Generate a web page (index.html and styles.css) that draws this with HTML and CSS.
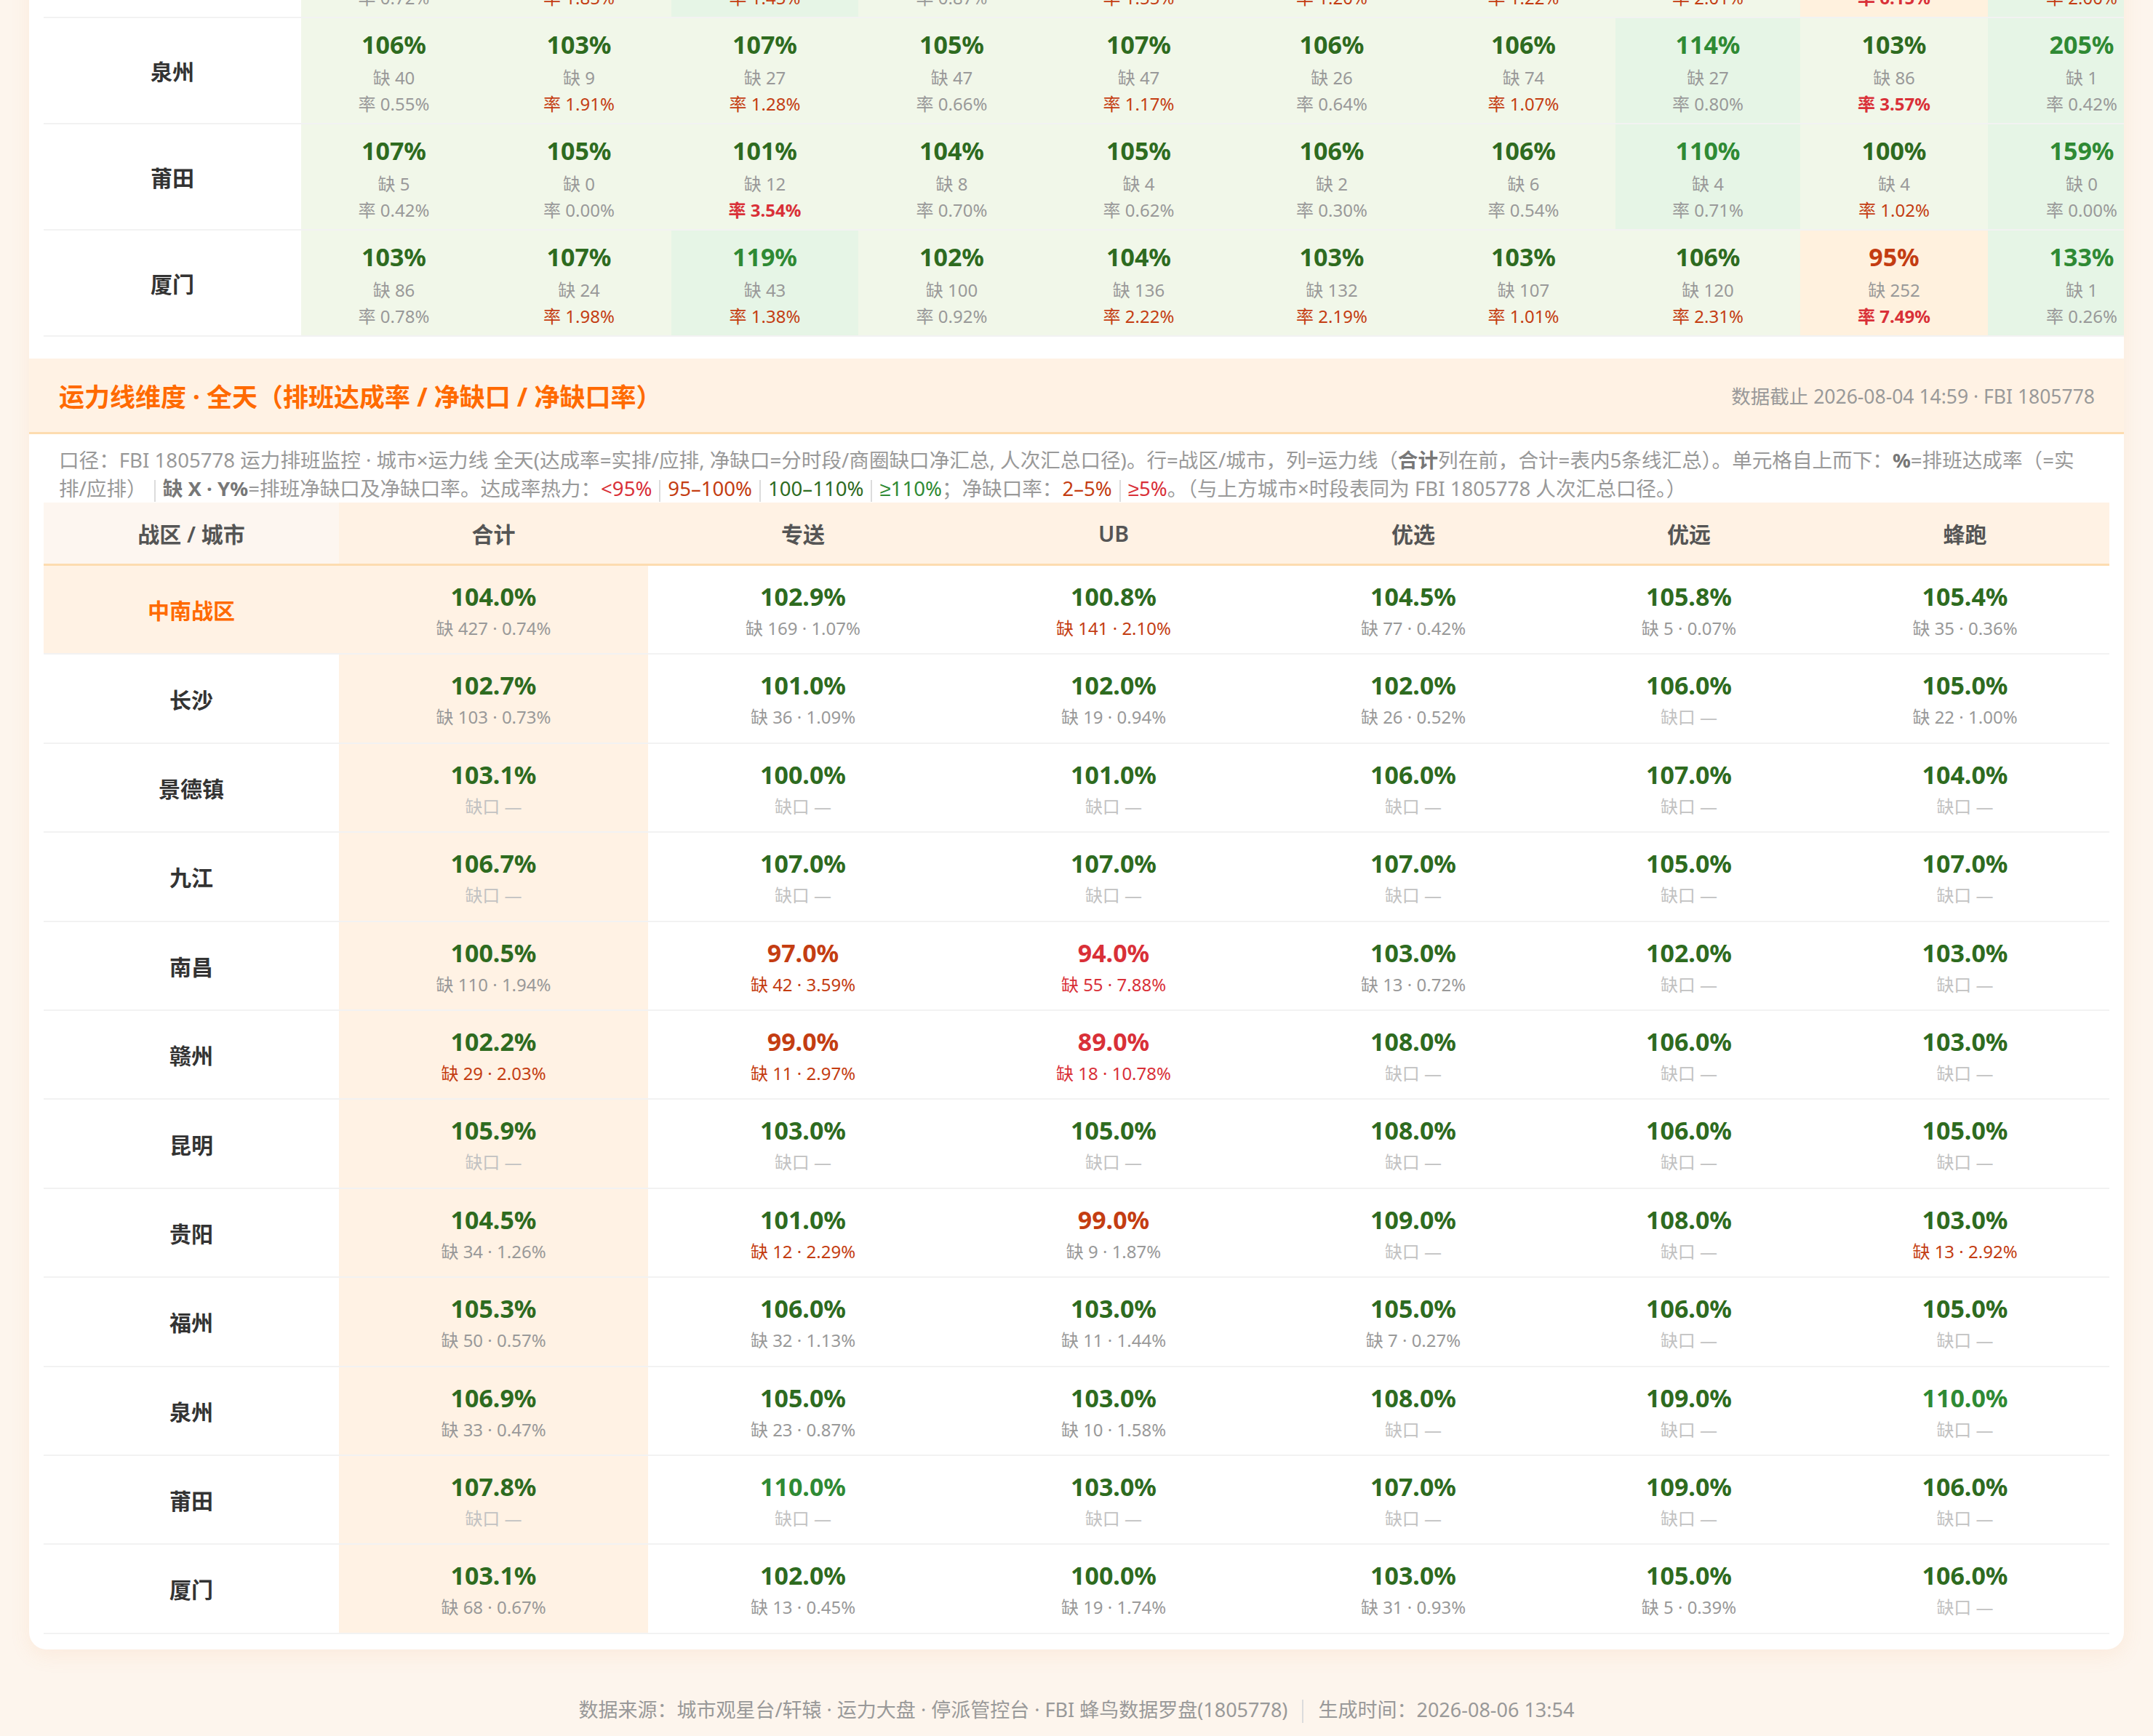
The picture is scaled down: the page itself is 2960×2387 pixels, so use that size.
FILE: index.html
```html
<!DOCTYPE html>
<html lang="zh-CN">
<head>
<meta charset="utf-8">
<title>运力排班监控</title>
<link rel="stylesheet" href="styles.css">
</head>
<body>
<div class="page">
  <div class="card">
    <div class="sec-top">
      <table class="tbl-top">
        <colgroup>
          <col class="w-lab"><col class="w255"><col class="w254"><col class="w257"><col class="w257"><col class="w257"><col class="w274"><col class="w253"><col class="w254"><col class="w258"><col class="w258">
        </colgroup>
        <tbody>
          <tr>
            <td class="lab">福州</td>
            <td class="g1"><div class="v">106%</div><div class="q">缺 63</div><div class="q">率 0.72%</div></td>
            <td class="g1"><div class="v">104%</div><div class="q">缺 30</div><div class="q ro">率 1.85%</div></td>
            <td class="g2"><div class="v">112%</div><div class="q">缺 35</div><div class="q ro">率 1.45%</div></td>
            <td class="g1"><div class="v">104%</div><div class="q">缺 58</div><div class="q">率 0.87%</div></td>
            <td class="g1"><div class="v">105%</div><div class="q">缺 80</div><div class="q ro">率 1.55%</div></td>
            <td class="g1"><div class="v">104%</div><div class="q">缺 40</div><div class="q ro">率 1.20%</div></td>
            <td class="g1"><div class="v">105%</div><div class="q">缺 95</div><div class="q ro">率 1.22%</div></td>
            <td class="g1"><div class="v">108%</div><div class="q">缺 60</div><div class="q ro">率 2.01%</div></td>
            <td class="o1"><div class="v">97%</div><div class="q">缺 170</div><div class="q rr">率 6.15%</div></td>
            <td class="g2"><div class="v">125%</div><div class="q">缺 2</div><div class="q ro">率 2.00%</div></td>
          </tr>
          <tr>
            <td class="lab">泉州</td>
            <td class="g1"><div class="v">106%</div><div class="q">缺 40</div><div class="q">率 0.55%</div></td>
            <td class="g1"><div class="v">103%</div><div class="q">缺 9</div><div class="q ro">率 1.91%</div></td>
            <td class="g1"><div class="v">107%</div><div class="q">缺 27</div><div class="q ro">率 1.28%</div></td>
            <td class="g1"><div class="v">105%</div><div class="q">缺 47</div><div class="q">率 0.66%</div></td>
            <td class="g1"><div class="v">107%</div><div class="q">缺 47</div><div class="q ro">率 1.17%</div></td>
            <td class="g1"><div class="v">106%</div><div class="q">缺 26</div><div class="q">率 0.64%</div></td>
            <td class="g1"><div class="v">106%</div><div class="q">缺 74</div><div class="q ro">率 1.07%</div></td>
            <td class="g2"><div class="v">114%</div><div class="q">缺 27</div><div class="q">率 0.80%</div></td>
            <td class="g1"><div class="v">103%</div><div class="q">缺 86</div><div class="q rr">率 3.57%</div></td>
            <td class="g2"><div class="v">205%</div><div class="q">缺 1</div><div class="q">率 0.42%</div></td>
          </tr>
          <tr>
            <td class="lab">莆田</td>
            <td class="g1"><div class="v">107%</div><div class="q">缺 5</div><div class="q">率 0.42%</div></td>
            <td class="g1"><div class="v">105%</div><div class="q">缺 0</div><div class="q">率 0.00%</div></td>
            <td class="g1"><div class="v">101%</div><div class="q">缺 12</div><div class="q rr">率 3.54%</div></td>
            <td class="g1"><div class="v">104%</div><div class="q">缺 8</div><div class="q">率 0.70%</div></td>
            <td class="g1"><div class="v">105%</div><div class="q">缺 4</div><div class="q">率 0.62%</div></td>
            <td class="g1"><div class="v">106%</div><div class="q">缺 2</div><div class="q">率 0.30%</div></td>
            <td class="g1"><div class="v">106%</div><div class="q">缺 6</div><div class="q">率 0.54%</div></td>
            <td class="g2"><div class="v">110%</div><div class="q">缺 4</div><div class="q">率 0.71%</div></td>
            <td class="g1"><div class="v">100%</div><div class="q">缺 4</div><div class="q ro">率 1.02%</div></td>
            <td class="g2"><div class="v">159%</div><div class="q">缺 0</div><div class="q">率 0.00%</div></td>
          </tr>
          <tr>
            <td class="lab">厦门</td>
            <td class="g1"><div class="v">103%</div><div class="q">缺 86</div><div class="q">率 0.78%</div></td>
            <td class="g1"><div class="v">107%</div><div class="q">缺 24</div><div class="q ro">率 1.98%</div></td>
            <td class="g2"><div class="v">119%</div><div class="q">缺 43</div><div class="q ro">率 1.38%</div></td>
            <td class="g1"><div class="v">102%</div><div class="q">缺 100</div><div class="q">率 0.92%</div></td>
            <td class="g1"><div class="v">104%</div><div class="q">缺 136</div><div class="q ro">率 2.22%</div></td>
            <td class="g1"><div class="v">103%</div><div class="q">缺 132</div><div class="q ro">率 2.19%</div></td>
            <td class="g1"><div class="v">103%</div><div class="q">缺 107</div><div class="q ro">率 1.01%</div></td>
            <td class="g1"><div class="v">106%</div><div class="q">缺 120</div><div class="q ro">率 2.31%</div></td>
            <td class="o1"><div class="v">95%</div><div class="q">缺 252</div><div class="q rr">率 7.49%</div></td>
            <td class="g2"><div class="v">133%</div><div class="q">缺 1</div><div class="q">率 0.26%</div></td>
          </tr>
        </tbody>
      </table>
    </div>

    <div class="sec-head">
      <div class="title">运力线维度 · 全天（排班达成率 / 净缺口 / 净缺口率）</div>
      <div class="stamp">数据截止 2026-08-04 14:59 · FBI 1805778</div>
    </div>

    <div class="sec-body">
      <p class="desc">口径：FBI 1805778 运力排班监控 · 城市×运力线 全天(达成率=实排/应排, 净缺口=分时段/商圈缺口净汇总, 人次汇总口径)。行=战区/城市，列=运力线（<b>合计</b>列在前，合计=表内5条线汇总）。单元格自上而下：<b>%</b>=排班达成率（=实<br>排/应排）<span class="sep"></span><b>缺 X · Y%</b>=排班净缺口及净缺口率。达成率热力：<span class="lr">&lt;95%</span><span class="sep"></span><span class="lo">95–100%</span><span class="sep"></span><span class="lg">100–110%</span><span class="sep"></span><span class="lG">≥110%</span>；净缺口率：<span class="lo">2–5%</span><span class="sep"></span><span class="lr">≥5%</span>。（与上方城市×时段表同为 FBI 1805778 人次汇总口径。）</p>

      <table class="tbl-main">
        <colgroup>
          <col class="m-lab"><col class="m-sum"><col class="m-zs"><col class="m-ub"><col class="m-yx"><col class="m-yy"><col class="m-fp">
        </colgroup>
        <thead>
          <tr>
            <th class="th-lab">战区 / 城市</th><th>合计</th><th>专送</th><th>UB</th><th>优选</th><th>优远</th><th>蜂跑</th>
          </tr>
        </thead>
        <tbody>
          <tr class="zone">
            <td class="lab">中南战区</td>
            <td class="sum"><span class="v vg">104.0%</span><span class="s">缺 427 · 0.74%</span></td>
            <td><span class="v vg">102.9%</span><span class="s">缺 169 · 1.07%</span></td>
            <td><span class="v vg">100.8%</span><span class="s so">缺 141 · 2.10%</span></td>
            <td><span class="v vg">104.5%</span><span class="s">缺 77 · 0.42%</span></td>
            <td><span class="v vg">105.8%</span><span class="s">缺 5 · 0.07%</span></td>
            <td><span class="v vg">105.4%</span><span class="s">缺 35 · 0.36%</span></td>
          </tr>
          <tr>
            <td class="lab">长沙</td>
            <td class="sum"><span class="v vg">102.7%</span><span class="s">缺 103 · 0.73%</span></td>
            <td><span class="v vg">101.0%</span><span class="s">缺 36 · 1.09%</span></td>
            <td><span class="v vg">102.0%</span><span class="s">缺 19 · 0.94%</span></td>
            <td><span class="v vg">102.0%</span><span class="s">缺 26 · 0.52%</span></td>
            <td><span class="v vg">106.0%</span><span class="s sn">缺口 —</span></td>
            <td><span class="v vg">105.0%</span><span class="s">缺 22 · 1.00%</span></td>
          </tr>
          <tr>
            <td class="lab">景德镇</td>
            <td class="sum"><span class="v vg">103.1%</span><span class="s sn">缺口 —</span></td>
            <td><span class="v vg">100.0%</span><span class="s sn">缺口 —</span></td>
            <td><span class="v vg">101.0%</span><span class="s sn">缺口 —</span></td>
            <td><span class="v vg">106.0%</span><span class="s sn">缺口 —</span></td>
            <td><span class="v vg">107.0%</span><span class="s sn">缺口 —</span></td>
            <td><span class="v vg">104.0%</span><span class="s sn">缺口 —</span></td>
          </tr>
          <tr>
            <td class="lab">九江</td>
            <td class="sum"><span class="v vg">106.7%</span><span class="s sn">缺口 —</span></td>
            <td><span class="v vg">107.0%</span><span class="s sn">缺口 —</span></td>
            <td><span class="v vg">107.0%</span><span class="s sn">缺口 —</span></td>
            <td><span class="v vg">107.0%</span><span class="s sn">缺口 —</span></td>
            <td><span class="v vg">105.0%</span><span class="s sn">缺口 —</span></td>
            <td><span class="v vg">107.0%</span><span class="s sn">缺口 —</span></td>
          </tr>
          <tr>
            <td class="lab">南昌</td>
            <td class="sum"><span class="v vg">100.5%</span><span class="s">缺 110 · 1.94%</span></td>
            <td><span class="v vo">97.0%</span><span class="s so">缺 42 · 3.59%</span></td>
            <td><span class="v vr">94.0%</span><span class="s sr">缺 55 · 7.88%</span></td>
            <td><span class="v vg">103.0%</span><span class="s">缺 13 · 0.72%</span></td>
            <td><span class="v vg">102.0%</span><span class="s sn">缺口 —</span></td>
            <td><span class="v vg">103.0%</span><span class="s sn">缺口 —</span></td>
          </tr>
          <tr>
            <td class="lab">赣州</td>
            <td class="sum"><span class="v vg">102.2%</span><span class="s so">缺 29 · 2.03%</span></td>
            <td><span class="v vo">99.0%</span><span class="s so">缺 11 · 2.97%</span></td>
            <td><span class="v vr">89.0%</span><span class="s sr">缺 18 · 10.78%</span></td>
            <td><span class="v vg">108.0%</span><span class="s sn">缺口 —</span></td>
            <td><span class="v vg">106.0%</span><span class="s sn">缺口 —</span></td>
            <td><span class="v vg">103.0%</span><span class="s sn">缺口 —</span></td>
          </tr>
          <tr>
            <td class="lab">昆明</td>
            <td class="sum"><span class="v vg">105.9%</span><span class="s sn">缺口 —</span></td>
            <td><span class="v vg">103.0%</span><span class="s sn">缺口 —</span></td>
            <td><span class="v vg">105.0%</span><span class="s sn">缺口 —</span></td>
            <td><span class="v vg">108.0%</span><span class="s sn">缺口 —</span></td>
            <td><span class="v vg">106.0%</span><span class="s sn">缺口 —</span></td>
            <td><span class="v vg">105.0%</span><span class="s sn">缺口 —</span></td>
          </tr>
          <tr>
            <td class="lab">贵阳</td>
            <td class="sum"><span class="v vg">104.5%</span><span class="s">缺 34 · 1.26%</span></td>
            <td><span class="v vg">101.0%</span><span class="s so">缺 12 · 2.29%</span></td>
            <td><span class="v vo">99.0%</span><span class="s">缺 9 · 1.87%</span></td>
            <td><span class="v vg">109.0%</span><span class="s sn">缺口 —</span></td>
            <td><span class="v vg">108.0%</span><span class="s sn">缺口 —</span></td>
            <td><span class="v vg">103.0%</span><span class="s so">缺 13 · 2.92%</span></td>
          </tr>
          <tr>
            <td class="lab">福州</td>
            <td class="sum"><span class="v vg">105.3%</span><span class="s">缺 50 · 0.57%</span></td>
            <td><span class="v vg">106.0%</span><span class="s">缺 32 · 1.13%</span></td>
            <td><span class="v vg">103.0%</span><span class="s">缺 11 · 1.44%</span></td>
            <td><span class="v vg">105.0%</span><span class="s">缺 7 · 0.27%</span></td>
            <td><span class="v vg">106.0%</span><span class="s sn">缺口 —</span></td>
            <td><span class="v vg">105.0%</span><span class="s sn">缺口 —</span></td>
          </tr>
          <tr>
            <td class="lab">泉州</td>
            <td class="sum"><span class="v vg">106.9%</span><span class="s">缺 33 · 0.47%</span></td>
            <td><span class="v vg">105.0%</span><span class="s">缺 23 · 0.87%</span></td>
            <td><span class="v vg">103.0%</span><span class="s">缺 10 · 1.58%</span></td>
            <td><span class="v vg">108.0%</span><span class="s sn">缺口 —</span></td>
            <td><span class="v vg">109.0%</span><span class="s sn">缺口 —</span></td>
            <td><span class="v vG">110.0%</span><span class="s sn">缺口 —</span></td>
          </tr>
          <tr>
            <td class="lab">莆田</td>
            <td class="sum"><span class="v vg">107.8%</span><span class="s sn">缺口 —</span></td>
            <td><span class="v vG">110.0%</span><span class="s sn">缺口 —</span></td>
            <td><span class="v vg">103.0%</span><span class="s sn">缺口 —</span></td>
            <td><span class="v vg">107.0%</span><span class="s sn">缺口 —</span></td>
            <td><span class="v vg">109.0%</span><span class="s sn">缺口 —</span></td>
            <td><span class="v vg">106.0%</span><span class="s sn">缺口 —</span></td>
          </tr>
          <tr>
            <td class="lab">厦门</td>
            <td class="sum"><span class="v vg">103.1%</span><span class="s">缺 68 · 0.67%</span></td>
            <td><span class="v vg">102.0%</span><span class="s">缺 13 · 0.45%</span></td>
            <td><span class="v vg">100.0%</span><span class="s">缺 19 · 1.74%</span></td>
            <td><span class="v vg">103.0%</span><span class="s">缺 31 · 0.93%</span></td>
            <td><span class="v vg">105.0%</span><span class="s">缺 5 · 0.39%</span></td>
            <td><span class="v vg">106.0%</span><span class="s sn">缺口 —</span></td>
          </tr>
        </tbody>
      </table>
    </div>
  </div>

  <footer class="foot">数据来源：城市观星台/轩辕 · 运力大盘 · 停派管控台 · FBI 蜂鸟数据罗盘(1805778)<span class="sep"></span>生成时间：2026-08-06 13:54</footer>
</div>
</body>
</html>
```

FILE: styles.css
```css
* { box-sizing: border-box; }
html, body { margin: 0; padding: 0; }
body {
  background: #fdf5ed;
  font-family: "Noto Sans", "Liberation Sans", "Noto Sans CJK SC", sans-serif;
  color: #333;
}
.page { padding: 0 40px; }

.card {
  margin-top: -121px;
  background: #fff;
  border-radius: 24px;
  overflow: hidden;
  box-shadow: 0 8px 28px rgba(240, 150, 80, 0.10);
}

/* ---------- top table (city × time, scrolled) ---------- */
.sec-top { padding: 0 20px 30px; }
.tbl-top {
  border-collapse: separate;
  border-spacing: 0;
  table-layout: fixed;
  width: 2931px;
}
.w-lab { width: 354px; }
.w253 { width: 253px; }
.w254 { width: 254px; }
.w255 { width: 255px; }
.w257 { width: 257px; }
.w258 { width: 258px; }
.w274 { width: 274px; }

.tbl-top td {
  border-bottom: 2px solid #f2f2f2;
  text-align: center;
  vertical-align: top;
  padding: 14px 0 8px;
}
.tbl-top td.lab {
  vertical-align: middle;
  padding: 0;
  font-size: 30px;
  font-weight: 700;
  color: #333;
  background: #fff;
}
.tbl-top .v {
  font-size: 34px;
  line-height: 44px;
  font-weight: 700;
}
.tbl-top .q {
  font-size: 24px;
  line-height: 36px;
  color: #999;
}
.tbl-top .v + .q { margin-top: 6px; }
.tbl-top .q.ro { color: #c43d12; }
.tbl-top .q.rr { color: #d93038; font-weight: 700; }

.g1 { background: #f1f7e9; }
.g2 { background: #e6f5e6; }
.o1 { background: #fff1de; }
.g1 .v { color: #2e6b1f; }
.g2 .v { color: #2f8a34; }
.o1 .v { color: #c43d12; }

/* ---------- section header ---------- */
.sec-head {
  display: flex;
  justify-content: space-between;
  align-items: center;
  height: 104px;
  padding: 0 40px 0 41px;
  background: #fff2e4;
  border-bottom: 3px solid #fddcb0;
}
.title {
  font-size: 35px;
  font-weight: 700;
  color: #ff6a00;
}
.stamp {
  font-size: 26.5px;
  color: #999;
}

/* ---------- section body ---------- */
.sec-body { padding: 16px 20px 21px; }
.desc {
  margin: 0 20px 0 21px;
  font-size: 27.6px;
  line-height: 39px;
  color: #999;
}
.desc b { color: #777; font-weight: 700; }
.sep {
  display: inline-block;
  width: 0;
  height: 30px;
  border-left: 2px solid #dcdcdc;
  margin: 0 10px;
  vertical-align: middle;
}
.lr { color: #d93038; }
.lo { color: #c43d12; }
.lg { color: #2e6b1f; }
.lG { color: #2f8a34; }

/* ---------- main table ---------- */
.tbl-main {
  width: 100%;
  border-collapse: separate;
  border-spacing: 0;
  table-layout: fixed;
}
.m-lab { width: 406px; }
.m-sum { width: 425px; }
.m-zs { width: 426px; }
.m-ub { width: 428px; }
.m-yx { width: 396px; }
.m-yy { width: 362px; }
.m-fp { width: 397px; }

.tbl-main th {
  height: 87px;
  padding: 0;
  background: #fff2e4;
  border-bottom: 3px solid #fddcb0;
  font-size: 30px;
  font-weight: 600;
  color: #555;
  text-align: center;
}
.tbl-main th.th-lab { background: #fdf6f0; }

.tbl-main td {
  border-bottom: 2px solid #f2f2f2;
  text-align: center;
  vertical-align: top;
  padding: 20px 0 17.4px;
}
.tbl-main td.lab {
  vertical-align: middle;
  padding: 0;
  font-size: 30px;
  font-weight: 700;
  color: #333;
}
.tbl-main tr.zone td.lab {
  color: #ff6a00;
  background: #fff2e4;
}
.tbl-main td.sum { background: #fff2e4; }

.tbl-main .v {
  display: block;
  font-size: 34px;
  line-height: 44px;
  font-weight: 700;
}
.tbl-main .s {
  display: block;
  margin-top: 5px;
  font-size: 24px;
  line-height: 34px;
  color: #999;
}
.vg { color: #2e6b1f; }
.vG { color: #2f8a34; }
.vo { color: #c43d12; }
.vr { color: #d93038; }
.tbl-main .s.so { color: #c43d12; }
.tbl-main .s.sr { color: #d93038; }
.tbl-main .s.sn { color: #c2c2c2; }

/* ---------- footer ---------- */
.foot {
  text-align: center;
  font-size: 27px;
  line-height: 40px;
  color: #999;
  padding: 63px 0 17px;
}
.foot .sep { margin: 0 20px; height: 32px; }
```
